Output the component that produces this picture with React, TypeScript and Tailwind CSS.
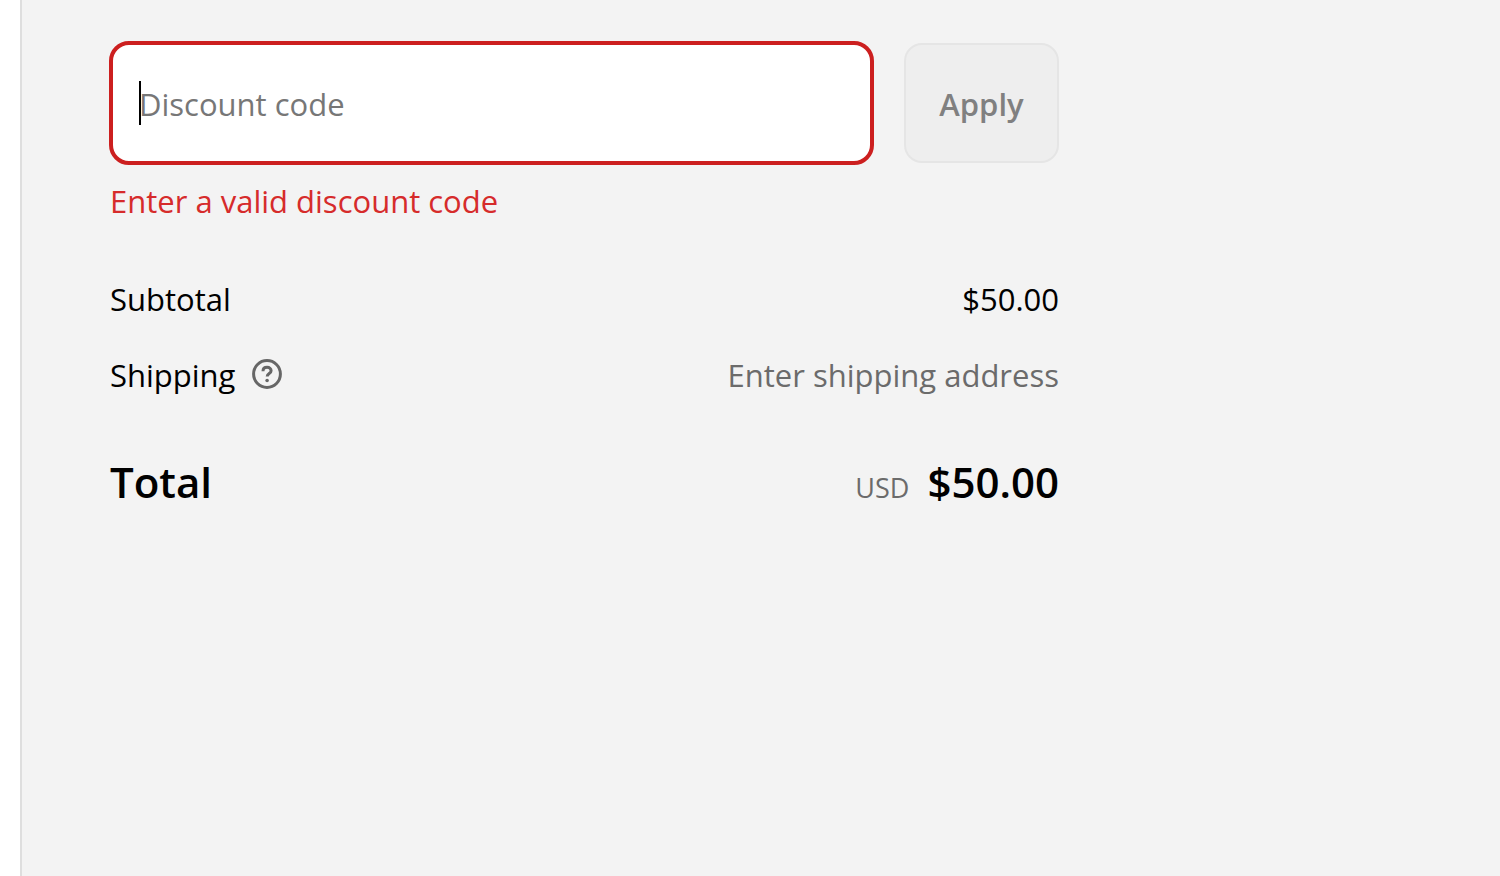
import React from "react";

function HelpIcon() {
  return (
    <svg viewBox="0 0 32 32" className="size-8" fill="none" stroke="#666" strokeWidth="3" aria-hidden="true">
      <circle cx="16" cy="15" r="13.4" />
      <path d="M12 12.200c0-2.400 1.700-3.900 4.100-3.900s4 1.500 4 3.500c0 2.900-3.900 2.700-3.900 5.700" />
      <circle cx="16.100" cy="21.500" r="1.800" fill="#666" stroke="none" />
    </svg>
  );
}

export default function App() {
  return (
    <div className="flex min-h-screen bg-white font-['Open_Sans','Noto_Sans',sans-serif] text-black">
      <main className="ml-5 flex-1 border-l-2 border-[#dedede] bg-[#f3f3f3] pl-[87px] pt-[41px]">
        <section className="w-full max-w-[950px]" aria-label="Order summary">
          <form className="flex items-start gap-[30px]" onSubmit={(e) => e.preventDefault()}>
            <div className="min-w-0 flex-1">
              <div className="relative">
                <input
                  id="discount"
                  aria-label="Discount code"
                  aria-invalid="true"
                  aria-describedby="discount-error"
                  placeholder="Discount code"
                  className="peer block h-[124px] w-full rounded-[20px] border-4 border-[#cc1f1f] bg-white px-[26px] pt-0.5 text-[31px] outline-none placeholder:text-[#777]"
                />
                <span aria-hidden="true" className="pointer-events-none absolute left-[30px] top-10 h-11 w-0.5 bg-black peer-focus:hidden" />
              </div>
              <p id="discount-error" className="mt-3 pl-px text-[31px] leading-[48px] text-[#d62b2b]">
                Enter a valid discount code
              </p>
            </div>
            <button type="submit" disabled className="mt-0.5 h-[120px] w-[155px] rounded-[18px] border-2 border-[#e5e5e5] bg-[#eeeeee] pt-0.5 text-[31px] font-semibold text-[#808080]">
              Apply
            </button>
          </form>
          <dl className="mt-[50px] pl-px text-[31px] leading-[48px]">
            <div className="flex justify-between">
              <dt>Subtotal</dt>
              <dd>$50.00</dd>
            </div>
            <div className="mt-7 flex justify-between">
              <dt className="flex items-center gap-4">
                Shipping
                <button type="button" aria-label="Shipping policy"><HelpIcon /></button>
              </dt>
              <dd className="text-[#6b6b6b]">Enter shipping address</dd>
            </div>
            <div className="mt-[59px] flex items-baseline justify-between text-[42px] font-semibold">
              <dt>Total</dt>
              <dd className="flex items-baseline gap-[18px]">
                <span className="text-[27px] font-normal text-[#6b6b6b]">USD</span>
                $50.00
              </dd>
            </div>
          </dl>
        </section>
      </main>
    </div>
  );
}
